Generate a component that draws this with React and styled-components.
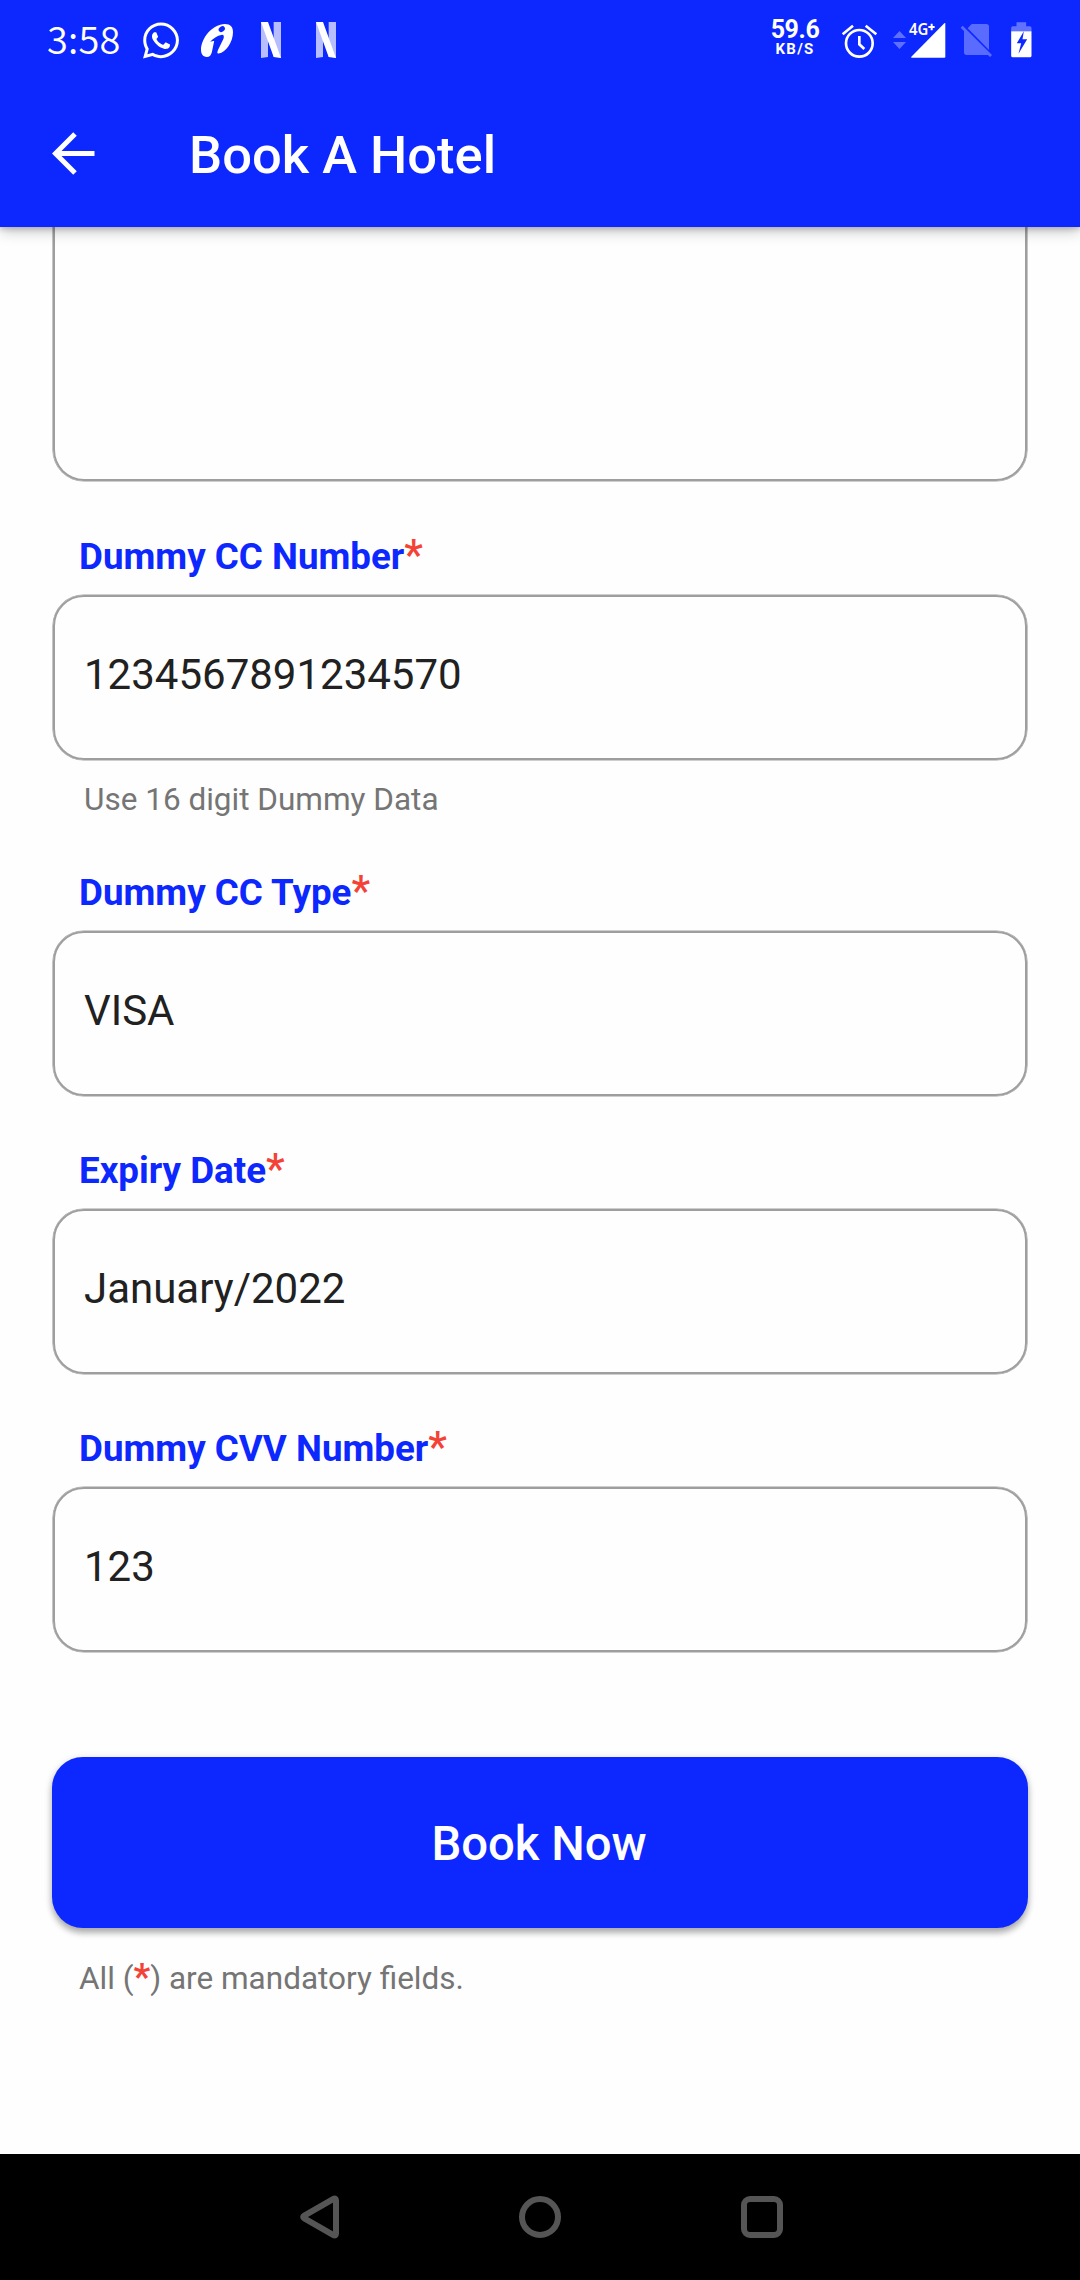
import React from "react";
import styled, { createGlobalStyle } from "styled-components";
import { FaWhatsapp } from "react-icons/fa";

const BLUE = "#0d27ff";

const GlobalStyle = createGlobalStyle`
  *, *::before, *::after { box-sizing: border-box; }
  body {
    margin: 0;
    background: #fefefe;
    font-family: Roboto, "Noto Sans", sans-serif;
  }
`;

const Screen = styled.div`
  width: 1080px;
  height: 2280px;
  display: flex;
  flex-direction: column;
  overflow: hidden;
  background: #fefefe;
`;

const Header = styled.header`
  flex: none;
  height: 227px;
  background: ${BLUE};
  color: #fff;
  box-shadow: 0 3px 14px rgba(0, 0, 0, 0.28), 0 2px 5px rgba(0, 0, 0, 0.16);
  z-index: 1;
`;

const StatusBar = styled.div`
  height: 80px;
  padding: 0 48px 0 47px;
  display: flex;
  justify-content: space-between;
`;

const StatusGroup = styled.div`
  display: flex;
  align-items: center;
`;

const Clock = styled.span`
  width: 96px;
  padding-bottom: 5px;
  font: 350 38px/75px "Noto Sans CJK SC", "Noto Sans", sans-serif;
  letter-spacing: 0.2px;
`;

const Slot = styled.span`
  display: flex;
  flex: none;
  width: ${(p) => p.$w}px;
  margin-right: ${(p) => p.$gap || 0}px;
  svg { display: block; flex: none; overflow: visible; }
`;

const WhatsAppIcon = styled(FaWhatsapp)`
  width: 36px;
  height: 41px;
`;

const Speed = styled.span`
  width: 50px;
  margin-right: 22px;
  padding-bottom: 4px;
  display: flex;
  flex-direction: column;
  align-items: center;
  font-weight: 700;
  font-size: 25px;
  line-height: 23px;
  letter-spacing: -0.4px;
`;

const SpeedUnit = styled.small`
  font-size: 15px;
  line-height: 17px;
  letter-spacing: 1.3px;
`;

const Toolbar = styled.div`
  height: 147px;
  padding: 0 52px;
  display: flex;
  align-items: center;
`;

const BackButton = styled.button`
  width: 137px;
  padding: 0;
  border: 0;
  background: none;
  display: flex;
`;

const Title = styled.h1`
  margin: 0;
  padding-top: 3px;
  font-size: 52.5px;
  font-weight: 500;
  line-height: 62px;
`;

const Form = styled.main`
  flex: 1;
  padding: 0 52px;
  display: flex;
  flex-direction: column;
`;

const Outline = styled.div`
  border: 2px solid #9e9e9e;
  box-shadow: 0 0 0 0.6px #9e9e9e;
  border-radius: 31px;
  margin: 0 1px;
`;

const RemarksBox = styled(Outline)`
  height: 254px;
  border-top: 0;
  border-radius: 0 0 31px 31px;
`;

const Field = styled.section`
  display: flex;
  flex-direction: column;
`;

const Label = styled.label`
  height: ${(p) => p.$height}px;
  padding: 0 0 15px 27px;
  display: flex;
  align-items: flex-end;
  color: ${BLUE};
  font-size: 36.75px;
  font-weight: 700;
  line-height: 46px;
`;

const Star = styled.span`
  color: #f44336;
  font-size: 42px;
  font-weight: 500;
  line-height: 50px;
`;

const ValueBox = styled(Outline)`
  height: 165px;
  padding: 0 29px 6px;
  display: flex;
  align-items: center;
  color: #212121;
  font-size: 42px;
`;

const Helper = styled.p`
  margin: 0;
  padding: 21px 0 0 32px;
  height: 58px;
  color: #757575;
  font-size: 31.5px;
  line-height: 37px;
`;

const BookButton = styled.button`
  margin-top: 105px;
  height: 171px;
  flex: none;
  padding: 2px 2px 0 0;
  border: 0;
  border-radius: 31px;
  background: ${BLUE};
  color: #fff;
  font: 500 47.25px/56px Roboto, sans-serif;
  box-shadow: 0 5px 6px rgba(0, 0, 0, 0.26), 0 2px 8px rgba(0, 0, 0, 0.14);
`;

const Footnote = styled.p`
  margin: 28px 0 0 27px;
  color: #757575;
  font-size: 31.5px;
  line-height: 46px;
`;

const FootStar = styled.span`
  color: #f44336;
  font-size: 36.75px;
  font-weight: 700;
  line-height: 40px;
`;

const NavBar = styled.nav`
  flex: none;
  height: 126px;
  padding-left: 297px;
  background: #000;
  display: grid;
  grid-template-columns: 219px 222px 48px;
  align-items: center;
`;

const fields = [
  { label: "Dummy CC Number", value: "1234567891234570", helper: "Use 16 digit Dummy Data", gap: 114 },
  { label: "Dummy CC Type", value: "VISA", gap: 113 },
  { label: "Expiry Date", value: "January/2022", gap: 113 },
  { label: "Dummy CVV Number", value: "123", gap: 113 },
];

const BankIcon = () => (
  <svg width="32" height="33" viewBox="0 0 94 97">
    <path fill="#fff" d="M70 0C87 0 94 9 94 24C94 52 74 83 52 87C46 87 48 81 51 74L66 43C69 35 66 31 60 32C48 34 35 42 27 52L36 50C39 49 39 51 38 54L32 82C30 91 25 97 17 97C5 97 0 88 0 76C0 42 34 0 70 0Z" />
    <ellipse cx="61" cy="15" rx="10" ry="7.5" transform="rotate(-35 61 15)" fill={BLUE} />
  </svg>
);

const NetflixIcon = () => (
  <svg width="20" height="36" viewBox="0 0 60 108">
    <path fill="#fff" opacity=".7" d="M0 0H21V105L0 108ZM38 0H60V108L38 105Z" />
    <path fill="#fff" d="M0 0H21L60 108Q49 105 38 105Z" />
  </svg>
);

const AlarmIcon = () => (
  <svg width="35" height="35" viewBox="0 -3 105 105" fill="none" stroke="#fff" strokeWidth="8">
    <circle cx="52" cy="58" r="40" />
    <path d="M52 36V61L67 75M2 31L33 5M71 5L103 31" />
  </svg>
);

const DataIcon = () => (
  <svg width="13" height="18" viewBox="0 0 38 52">
    <path fill="#fff" opacity=".34" d="M19 0L38 20H0ZM0 32H38L19 52Z" />
  </svg>
);

const SignalIcon = () => (
  <svg width="38" height="36" viewBox="0 0 114 108">
    <path fill="#fff" d="M112 3V105Q112 107 109 107H11Q8 107 10 104L109 4Z" />
    <text x="3" y="40" fill="#fff" fontFamily="Noto Sans" fontSize="48" fontWeight="600" textLength="58" lengthAdjust="spacingAndGlyphs">4G</text>
    <path d="M71 5V25M61 15H80" stroke="#fff" strokeWidth="6" />
  </svg>
);

const NoSimIcon = () => (
  <svg width="31" height="34" viewBox="0 -1 93 102">
    <path fill="#fff" opacity=".32" d="M34 2H76Q84 2 84 10V80L20 15L29 5Q31 2 34 2ZM9 23L81 95H17Q9 95 9 87ZM5 7L93 95L87 101L-1 13Z" />
  </svg>
);

const BatteryIcon = () => (
  <svg width="21" height="36" viewBox="0 0 62 108">
    <path fill="#fff" opacity=".35" d="M16 1H45V13H56Q61 13 61 18V28H0V18Q0 13 5 13H16Z" />
    <path fill="#fff" d="M0 28H61V101Q61 106 56 106H5Q0 106 0 101Z" />
    <path fill={BLUE} d="M38 28L17 64H30L22 95L48 52H34Z" />
  </svg>
);

const BackArrow = () => (
  <svg width="43" height="43" viewBox="0 0 43 43" fill="none" stroke="#fff" strokeWidth="5">
    <path d="M42.500 21.500H4M23 2L3.500 21.500L23 41" />
  </svg>
);

const NavTriangle = () => (
  <svg width="48" height="48" viewBox="0 0 48 48" fill="none" stroke="#555" strokeWidth="6" strokeLinejoin="round">
    <path d="M7.300 22.600L36.500 5.800Q39 4.800 39 7.500V40.500Q39 43.200 36.500 42.200L7.300 25.400Q5 24 7.300 22.600Z" />
  </svg>
);

const NavCircle = () => (
  <svg width="48" height="48" viewBox="0 0 48 48" fill="none" stroke="#555" strokeWidth="6">
    <circle cx="24" cy="24" r="18" />
  </svg>
);

const NavSquare = () => (
  <svg width="48" height="48" viewBox="0 0 48 48" fill="none" stroke="#555" strokeWidth="6">
    <rect x="6" y="6" width="36" height="36" rx="6" />
  </svg>
);

export default function App() {
  return (
    <>
      <GlobalStyle />
      <Screen>
        <Header>
          <StatusBar>
            <StatusGroup>
              <Clock>3:58</Clock>
              <Slot $w={36} $gap={22}><WhatsAppIcon /></Slot>
              <Slot $w={32} $gap={28}><BankIcon /></Slot>
              <Slot $w={20} $gap={35}><NetflixIcon /></Slot>
              <Slot $w={20}><NetflixIcon /></Slot>
            </StatusGroup>
            <StatusGroup>
              <Speed>59.6<SpeedUnit>KB/S</SpeedUnit></Speed>
              <Slot $w={35} $gap={16}><AlarmIcon /></Slot>
              <Slot $w={13} $gap={2}><DataIcon /></Slot>
              <Slot $w={38} $gap={15}><SignalIcon /></Slot>
              <Slot $w={31} $gap={19}><NoSimIcon /></Slot>
              <Slot $w={21}><BatteryIcon /></Slot>
            </StatusGroup>
          </StatusBar>
          <Toolbar>
            <BackButton aria-label="Back"><BackArrow /></BackButton>
            <Title>Book A Hotel</Title>
          </Toolbar>
        </Header>
        <Form>
          <RemarksBox />
          {fields.map((f) => (
            <Field key={f.label}>
              <Label $height={f.gap}>{f.label}<Star>*</Star></Label>
              <ValueBox>{f.value}</ValueBox>
              {f.helper && <Helper>{f.helper}</Helper>}
            </Field>
          ))}
          <BookButton>Book Now</BookButton>
          <Footnote>All (<FootStar>*</FootStar>) are mandatory fields.</Footnote>
        </Form>
        <NavBar>
          <NavTriangle />
          <NavCircle />
          <NavSquare />
        </NavBar>
      </Screen>
    </>
  );
}
